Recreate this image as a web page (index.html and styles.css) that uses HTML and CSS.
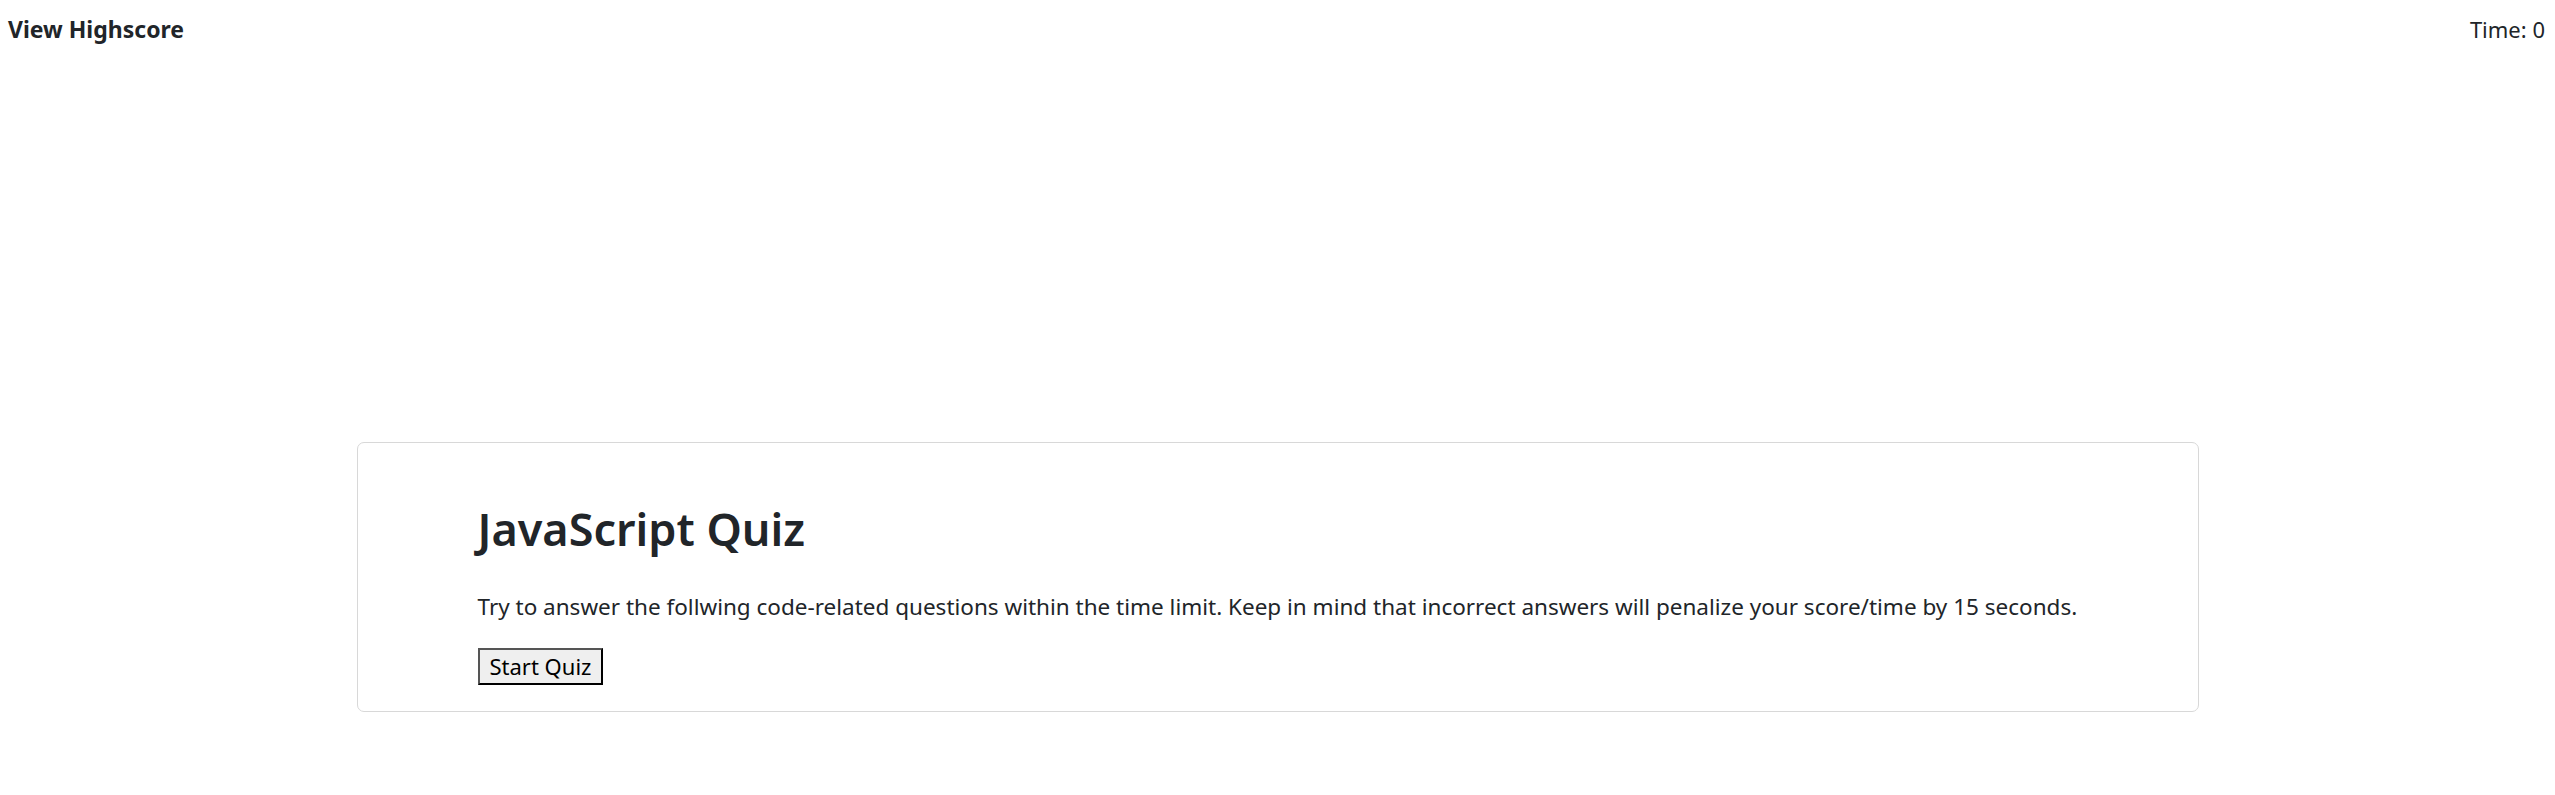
FILE: index.html
```html
<!DOCTYPE html>
<html lang="en">
<head>
<meta charset="utf-8">
<title>JavaScript Quiz</title>
<link rel="stylesheet" href="styles.css">
</head>
<body>
  <header class="topbar">
    <a class="highscore-link" href="#">View Highscore</a>
    <div class="timer">Time: <span class="timer-value">0</span></div>
  </header>
  <main class="main">
    <section class="card">
      <h1 class="card-title">JavaScript Quiz</h1>
      <p class="card-text">Try to answer the follwing code-related questions within the time limit. Keep in mind that incorrect answers will penalize your score/time by 15 seconds.</p>
      <button class="start-btn" type="button">Start Quiz</button>
    </section>
  </main>
</body>
</html>
```

FILE: styles.css
```css
* {
  box-sizing: border-box;
}

html, body {
  margin: 0;
  padding: 0;
  background: #ffffff;
}

body {
  font-family: "Noto Sans", "Open Sans", sans-serif;
  color: #212529;
}

.topbar {
  display: flex;
  justify-content: space-between;
  align-items: baseline;
  padding: 14px 10px 0 8px;
  font-size: 22px;
  line-height: 30px;
}

.highscore-link {
  color: #212529;
  font-weight: 700;
  font-size: 23px;
  text-decoration: none;
}

.timer {
  color: #212529;
}

.main {
  padding-top: 398px;
}

.card {
  width: 1842px;
  margin: 0 auto;
  border: 1px solid #d8d8d8;
  border-radius: 7px;
  padding: 59px 40px 26px 120px;
}

.card-title {
  margin: 0 0 34px 0;
  font-size: 45px;
  font-weight: 600;
  line-height: 54px;
  color: #212529;
}

.card-text {
  margin: 0 0 24px 0;
  font-size: 22.5px;
  line-height: 34px;
  color: #212529;
}

.start-btn {
  font-family: "Noto Sans", "Open Sans", sans-serif;
  font-size: 22px;
  line-height: 29px;
  padding: 2px 10px;
  color: #000000;
  background: #efefef;
  border: 2px solid;
  border-color: #555555 #000000 #000000 #555555;
  border-radius: 0;
}
```
